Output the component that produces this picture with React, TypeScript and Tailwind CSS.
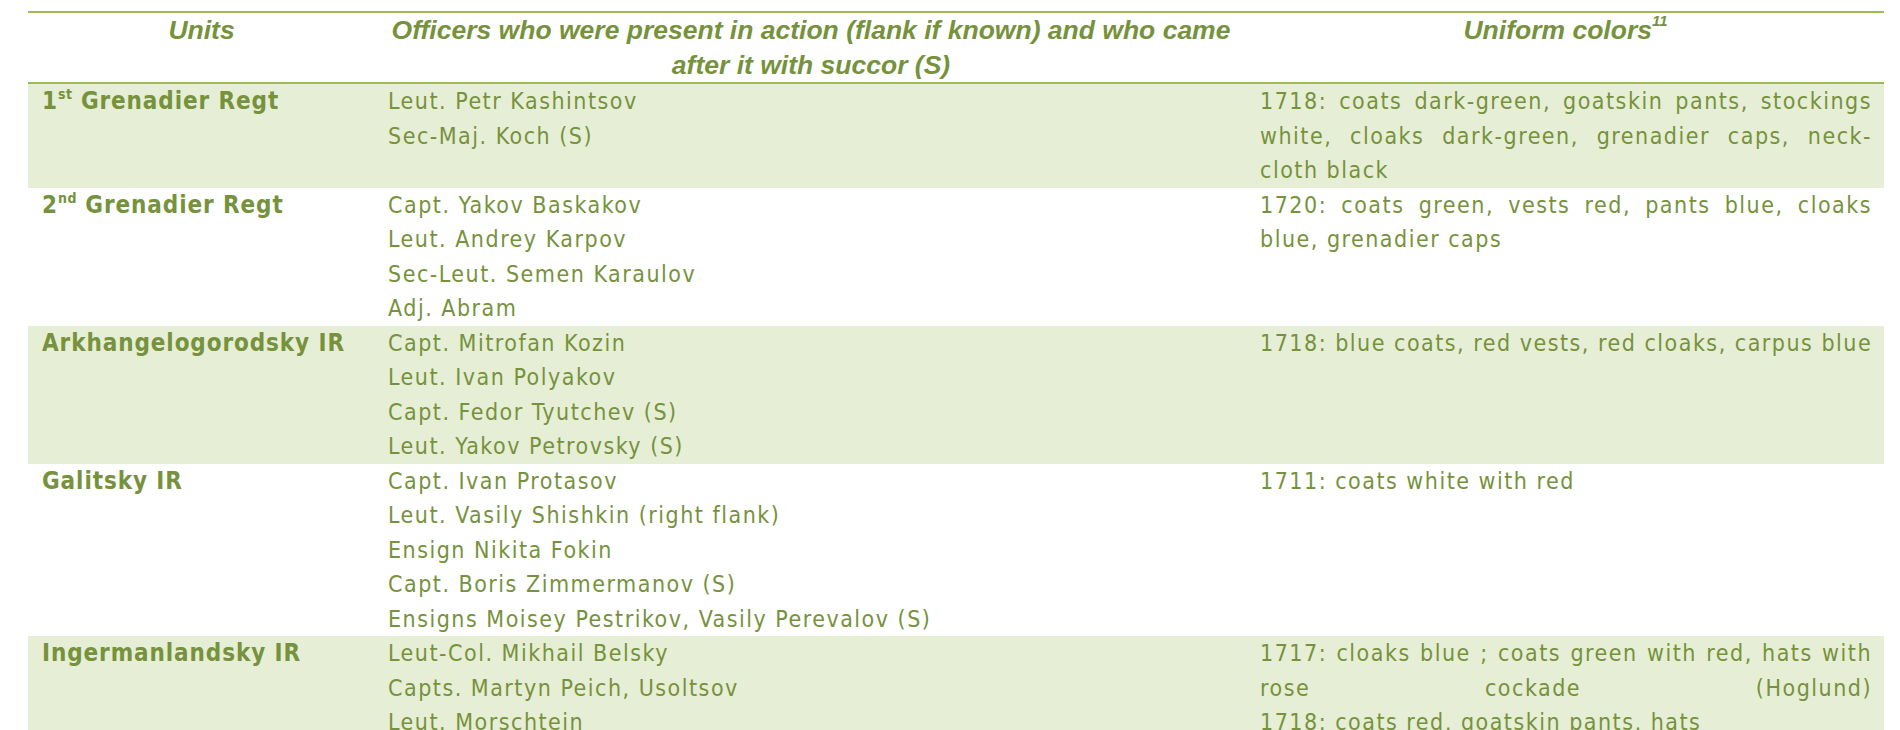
import React from "react";

type Row = {
  unit: React.ReactNode;
  officers: string[];
  colors: { text: string; justify?: boolean; spread?: string[] }[];
  shaded: boolean;
};

const rows: Row[] = [
  {
    unit: (
      <>
        1<sup className="text-[14px] -top-[10px] tracking-[0.5px]">st</sup> Grenadier Regt
      </>
    ),
    officers: ["Leut. Petr Kashintsov", "Sec-Maj. Koch (S)"],
    colors: [
      { text: "1718: coats dark-green, goatskin pants, stockings", justify: true },
      { text: "white, cloaks dark-green, grenadier caps, neck-", justify: true },
      { text: "cloth black" },
    ],
    shaded: true,
  },
  {
    unit: (
      <>
        2<sup className="text-[14px] -top-[10px] tracking-[0.5px]">nd</sup> Grenadier Regt
      </>
    ),
    officers: [
      "Capt. Yakov Baskakov",
      "Leut. Andrey Karpov",
      "Sec-Leut. Semen Karaulov",
      "Adj. Abram",
    ],
    colors: [
      { text: "1720: coats green, vests red, pants blue, cloaks", justify: true },
      { text: "blue, grenadier caps" },
    ],
    shaded: false,
  },
  {
    unit: "Arkhangelogorodsky IR",
    officers: [
      "Capt. Mitrofan Kozin",
      "Leut. Ivan Polyakov",
      "Capt. Fedor Tyutchev (S)",
      "Leut. Yakov Petrovsky (S)",
    ],
    colors: [{ text: "1718: blue coats, red vests, red cloaks, carpus blue" }],
    shaded: true,
  },
  {
    unit: "Galitsky IR",
    officers: [
      "Capt. Ivan Protasov",
      "Leut. Vasily Shishkin (right flank)",
      "Ensign Nikita Fokin",
      "Capt. Boris Zimmermanov (S)",
      "Ensigns Moisey Pestrikov, Vasily Perevalov (S)",
    ],
    colors: [{ text: "1711: coats white with red" }],
    shaded: false,
  },
  {
    unit: "Ingermanlandsky IR",
    officers: [
      "Leut-Col. Mikhail Belsky",
      "Capts. Martyn Peich, Usoltsov",
      "Leut. Morschtein",
    ],
    colors: [
      { text: "1717: cloaks blue ; coats green with red, hats with", justify: true },
      { text: "", spread: ["rose", "cockade", "(Hoglund)"] },
      { text: "1718: coats red, goatskin pants, hats" },
    ],
    shaded: true,
  },
];

const bodyFont =
  "font-['DejaVu_Sans_Condensed','DejaVu_Sans',sans-serif] text-[23px] leading-[34.5px] tracking-[1.5px]";

export default function App() {
  return (
    <div className="w-[1900px] h-[730px] overflow-hidden bg-white pt-[11px] pl-[28px] text-[#76923c]">
      <div className="w-[1856px] border-t-2 border-[#9bbb59]">
        <div className="grid grid-cols-[347px_872px_637px] h-[71px] border-b-2 border-[#9bbb59] font-['Liberation_Sans',Arial,sans-serif] font-bold italic text-[26.5px] leading-[34.5px] text-center">
          <div className="px-[13px] whitespace-nowrap">Units</div>
          <div className="whitespace-nowrap">
            <div>Officers who were present in action (flank if known) and who came</div>
            <div>after it with succor (S)</div>
          </div>
          <div className="px-[13px] whitespace-nowrap">
            Uniform colors
            <sup className="text-[15px] -top-[13px]">11</sup>
          </div>
        </div>
        {rows.map((r, i) => (
          <div
            key={i}
            className={`grid grid-cols-[347px_872px_637px] ${r.shaded ? "bg-[#e6eed5]" : "bg-white"}`}
          >
            <div className="px-[14px] font-['DejaVu_Sans_Condensed','DejaVu_Sans',sans-serif] font-bold text-[24px] leading-[34.5px] tracking-[0.9px] whitespace-nowrap">
              {r.unit}
            </div>
            <div className={`px-[13px] ${bodyFont}`}>
              {r.officers.map((o, j) => (
                <div key={j} className="whitespace-nowrap">
                  {o}
                </div>
              ))}
            </div>
            <div className={`pl-[13px] pr-[12px] ${bodyFont}`}>
              {r.colors.map((c, j) =>
                c.spread ? (
                  <div key={j} className="flex justify-between">
                    {c.spread.map((w, k) => (
                      <span key={k}>{w}</span>
                    ))}
                  </div>
                ) : (
                  <div
                    key={j}
                    className={c.justify ? "text-justify [text-align-last:justify]" : "whitespace-nowrap"}
                  >
                    {c.text}
                  </div>
                )
              )}
            </div>
          </div>
        ))}
      </div>
    </div>
  );
}
